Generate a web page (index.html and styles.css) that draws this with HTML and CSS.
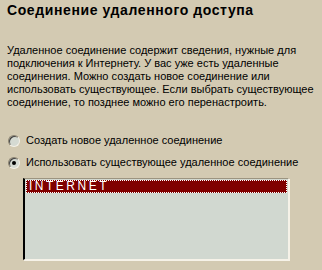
FILE: index.html
```html
<!DOCTYPE html>
<html lang="ru">
<head>
  <meta charset="UTF-8">
  <title>Соединение удаленного доступа</title>
  <link rel="stylesheet" href="styles.css">
</head>
<body>
  <div class="page">
    <h1 class="title">Соединение удаленного доступа</h1>
    <p class="intro">
      Удаленное соединение содержит сведения, нужные для<br>
      подключения к Интернету. У вас уже есть удаленные<br>
      соединения. Можно создать новое соединение или<br>
      использовать существующее. Если выбрать существующее<br>
      соединение, то позднее можно его перенастроить.
    </p>
    <div class="choices">
      <label class="choice">
        <input type="radio" name="conn">
        <span>Создать новое удаленное соединение</span>
      </label>
      <label class="choice">
        <input type="radio" name="conn" checked>
        <span>Использовать существующее удаленное соединение</span>
      </label>
    </div>
    <div class="listbox">
      <div class="item selected">INTERNET</div>
    </div>
  </div>
</body>
</html>
```

FILE: styles.css
```css
html, body{
  margin: 0; height: 100%;
  background-color: #D3CAB2;
}
.page{
  padding: 2px 7px 0 7px;
  font-family: "Liberation Sans", Arial, sans-serif;
  color: #000;
}
.title{
  margin: 0; font-size: 14px; line-height: 17px;
  font-weight: bold; letter-spacing: 0.6px;
}
.intro{
  margin: 25px 0 0 0;
  font-size: 11px; line-height: 13px;
  white-space: nowrap;
}
.choices{
  margin-top: 25px;
  display: flex; flex-direction: column; gap: 9px;
}
.choice{
  display: flex; align-items: center; gap: 6px;
  font-size: 11px; line-height: 13px;
}
.choice input{
  appearance: none; -webkit-appearance: none;
  margin: 0 0 0 1px; width: 12px; height: 12px;
  border-radius: 50%;
  border: 1px solid; border-color: #8a8270 #f4f0e6 #f4f0e6 #8a8270;
  background-color: #D5DAD2;
  box-shadow: inset 1px 1px 0 #404040;
  display: grid; place-items: center;
}
.choice input:checked::after{
  content: ""; width: 4px; height: 4px; border-radius: 50%;
  background-color: #000;
}
.listbox{
  margin: 9px 0 0 16px;
  width: 261px; height: 79px;
  border: 1px solid; border-color: #9c9480 #f6f2e8 #f6f2e8 #9c9480;
  border-left: 2px solid #000;
  box-shadow: 1px 1px 0 #f6f2e8;
  background-color: #D1D8D0;
  padding: 1px 1px 0 1px;
}
.item{
  height: 13px; line-height: 13px;
  font-size: 12px; letter-spacing: 2.5px;
  padding-left: 3px;
  color: #fff;
}
.item.selected{
  background-color: #800000;
  outline: 1px dotted #fff; outline-offset: -1px;
}
```
